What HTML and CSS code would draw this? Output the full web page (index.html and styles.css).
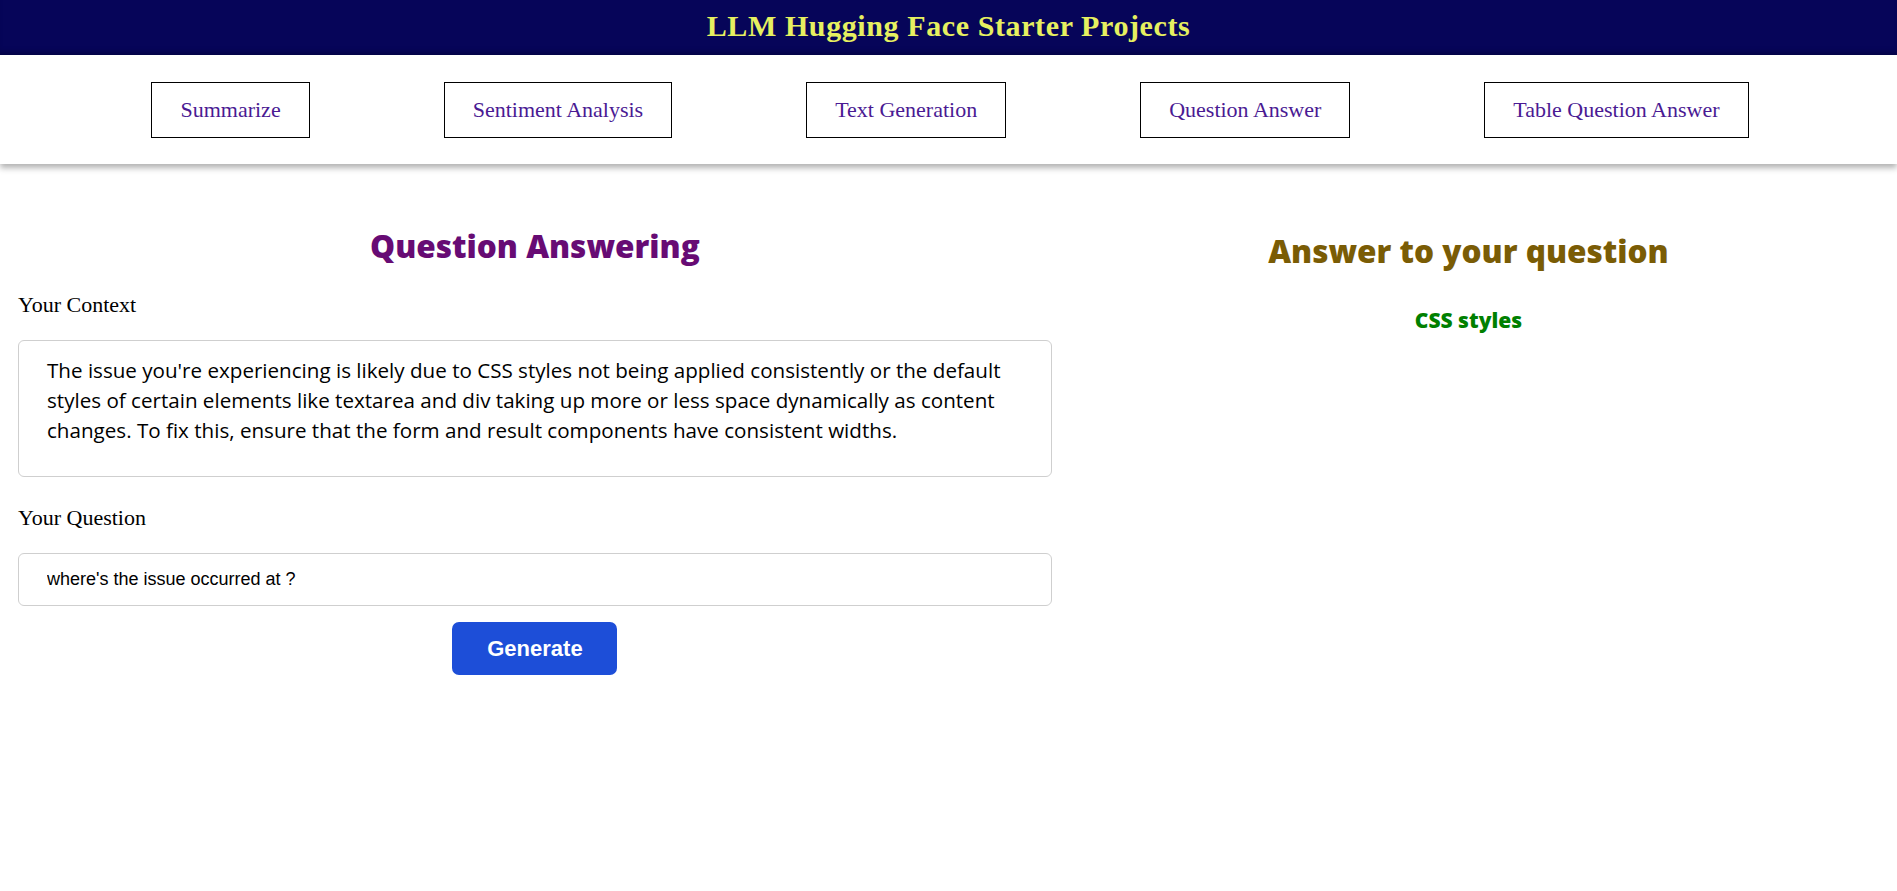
FILE: index.html
```html
<!DOCTYPE html>
<html lang="en">
<head>
    <meta charset="UTF-8">
    <meta name="viewport" content="width=device-width, initial-scale=1.0">
    <title>LLM Hugging Face Starter Projects</title>
    <link rel="stylesheet" href="styles.css">
</head>
<body>
    <header class="topbar">
        <h1>LLM Hugging Face Starter Projects</h1>
    </header>

    <nav class="tabs">
        <a class="tab" href="#">Summarize</a>
        <a class="tab" href="#">Sentiment Analysis</a>
        <a class="tab" href="#">Text Generation</a>
        <a class="tab" href="#">Question Answer</a>
        <a class="tab" href="#">Table Question Answer</a>
    </nav>

    <main class="layout">
        <section class="qa-form">
            <h2>Question Answering</h2>

            <label for="context">Your Context</label>
            <textarea id="context" rows="3" wrap="off">The issue you're experiencing is likely due to CSS styles not being applied consistently or the default
styles of certain elements like textarea and div taking up more or less space dynamically as content
changes. To fix this, ensure that the form and result components have consistent widths.</textarea>

            <label for="question">Your Question</label>
            <input type="text" id="question" value="where's the issue occurred at ?">

            <div class="actions">
                <button class="generate">Generate</button>
            </div>
        </section>

        <section class="qa-result">
            <h2>Answer to your question</h2>
            <p class="answer">CSS styles</p>
        </section>
    </main>
</body>
</html>
```

FILE: styles.css
```css
body {
    margin: 0;
    font-family: "Liberation Serif", "Times New Roman", serif;
    background-color: #fff;
    color: #000;
}

.topbar {
    background-color: #060559;
    height: 55px;
    box-sizing: border-box;
    padding-bottom: 4px;
    display: flex;
    align-items: center;
    justify-content: center;
    box-shadow: inset 0 -6px 6px -4px rgba(0, 0, 0, 0.25);
}
.topbar h1 {
    margin: 0;
    color: #e6f060;
    font-size: 30px;
    font-weight: bold;
    letter-spacing: 0.6px;
}

.tabs {
    display: flex;
    justify-content: center;
    gap: 134px;
    padding: 27px 0 26px 3px;
    background-color: #fff;
    box-shadow: 0 4px 6px rgba(0, 0, 0, 0.3);
}
.tab {
    display: block;
    border: 1px solid #000;
    padding: 15px 28px;
    font-size: 22px;
    line-height: 24px;
    color: #4a1a93;
    text-decoration: none;
}

.layout {
    display: grid;
    grid-template-columns: 5fr 4fr;
    padding: 0 18px;
}

.qa-form h2 {
    font-family: "Open Sans", sans-serif;
    font-weight: 800;
    color: #670b74;
    font-size: 31.5px;
    text-align: center;
    margin: 60px 0 25px;
}
.qa-form label {
    display: block;
    font-size: 22px;
    margin-bottom: 22px;
}
.qa-form textarea {
    display: block;
    width: 100%;
    height: 137px;
    box-sizing: border-box;
    padding: 14px 28px;
    border: 1px solid #cfcfcf;
    border-radius: 6px;
    font-family: "Open Sans", sans-serif;
    font-size: 20.6px;
    line-height: 30px;
    color: #000;
    resize: none;
    overflow: hidden;
    margin-bottom: 28px;
}
.qa-form input[type="text"] {
    display: block;
    width: 100%;
    height: 53px;
    box-sizing: border-box;
    padding: 0 28px;
    border: 1px solid #cfcfcf;
    border-radius: 6px;
    font-family: "Liberation Sans", Arial, sans-serif;
    font-size: 18px;
    color: #000;
}
.actions {
    text-align: center;
    margin-top: 16px;
}
.generate {
    width: 165px;
    height: 53px;
    border: none;
    border-radius: 7px;
    background-color: #1d4ed8;
    color: #fff;
    font-family: "Liberation Sans", Arial, sans-serif;
    font-weight: bold;
    font-size: 22px;
    cursor: pointer;
}

.qa-result {
    text-align: center;
    padding-left: 6px;
}
.qa-result h2 {
    font-family: "Open Sans", sans-serif;
    font-weight: 800;
    color: #7a5c05;
    font-size: 31.5px;
    margin: 65px 0 34px;
}
.answer {
    margin: 0;
    font-family: "Open Sans", sans-serif;
    font-weight: 800;
    color: #008000;
    font-size: 21px;
}
```
